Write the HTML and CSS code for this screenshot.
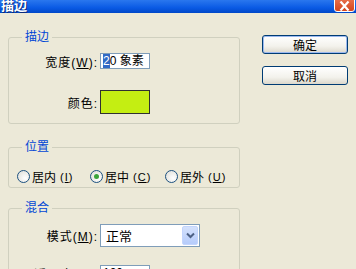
FILE: index.html
```html
<!DOCTYPE html>
<html lang="zh-CN">
<head>
  <meta charset="UTF-8" />
  <title>描边</title>
  <link rel="stylesheet" href="styles.css">
</head>
<body>

  <div class="titlebar">
    <span class="title">描边</span>
    <span class="close">
      <svg width="13" height="10" viewBox="0 0 13 10"><path d="M2.5 0.5 L10.5 9.5 M10.5 0.5 L2.5 9.5" stroke="#fff" stroke-width="2.2" fill="none"/></svg>
    </span>
  </div>

  <div class="dialog">
    <div class="main">

      <fieldset class="group stroke">
        <legend>描边</legend>
        <div class="form">
          <label>宽度(<u>W</u>):</label>
          <div class="textbox wide"><span class="sel">2</span>0 象素</div>
          <label class="tall">颜色:</label>
          <div class="swatch"></div>
        </div>
      </fieldset>

      <fieldset class="group position">
        <legend>位置</legend>
        <div class="radios">
          <div class="radio"><span class="dot"></span>居内<span class="key">(<u>I</u>)</span></div>
          <div class="radio"><span class="dot checked"></span>居中<span class="key">(<u>C</u>)</span></div>
          <div class="radio"><span class="dot"></span>居外<span class="key">(<u>U</u>)</span></div>
        </div>
      </fieldset>

      <fieldset class="group blend">
        <legend>混合</legend>
        <div class="form blend-form">
          <label>模式(<u class="mode">M</u>):</label>
          <div class="select">
            <span>正常</span>
            <span class="arrow">
              <svg width="9" height="7" viewBox="0 0 9 7"><path d="M1 1.5 L4.5 5 L8 1.5" stroke="#4d6185" stroke-width="2" fill="none"/></svg>
            </span>
          </div>
          <label>不透明度(<u>O</u>):</label>
          <div class="opacity"><div class="textbox">100</div><span class="pct">%</span></div>
        </div>
      </fieldset>

    </div>

    <div class="actions">
      <button class="btn default">确定</button>
      <button class="btn">取消</button>
    </div>
  </div>

</body>
</html>
```

FILE: styles.css
```css
* {
  box-sizing: border-box;
}

html, body {
  margin: 0;
  padding: 0;
}

body {
  width: 356px;
  height: 269px;
  overflow: hidden;
  background: #ece9d8;
  font-family: "Liberation Sans", "Noto Sans CJK SC", sans-serif;
  font-size: 12px;
  color: #000;
}

/* title bar, top is cut off */
.titlebar {
  height: 13px;
  background: linear-gradient(#2a77ee, #0a5ae4 60%, #0048c8);
  display: flex;
  justify-content: space-between;
  align-items: flex-end;
  overflow: hidden;
}

.title {
  color: #fff;
  font-weight: bold;
  font-size: 13px;
  line-height: 13px;
  margin-bottom: 1px;
  padding-left: 1px;
  text-shadow: 1px 1px 0 #0a2a7a;
}

.close {
  width: 21px;
  height: 14px;
  margin-right: 1px;
  align-self: flex-start;
  margin-top: -2px;
  background: linear-gradient(#e8704c, #d4461e);
  border: 1px solid #fff;
  border-radius: 0 0 3px 3px;
  display: flex;
  justify-content: center;
  align-items: center;
  padding-top: 2px;
}

.dialog {
  display: flex;
  padding-left: 8px;
}

.main {
  width: 232px;
  padding-top: 18px;
}

/* group boxes */
.group {
  margin: 0;
  padding: 0;
  min-width: 0;
  border: 1px solid #d0d0bf;
  border-radius: 3px;
}

.group legend {
  margin-left: 13px;
  padding: 0 3px;
  font-size: 12px;
  line-height: 12px;
  color: #0046d5;
}

.stroke {
  height: 93px;
}

.position {
  height: 47px;
  margin-top: 17px;
}

.blend {
  height: 80px;
  margin-top: 14px;
}

.form {
  display: grid;
  grid-template-columns: 88px auto;
  column-gap: 3px;
  align-items: center;
}

.form label {
  text-align: right;
  letter-spacing: 1px;
  margin-right: -1px;
}

.stroke .form {
  grid-template-rows: 16px 24px;
  row-gap: 21px;
  padding-top: 10px;
}

.textbox {
  height: 16px;
  width: 50px;
  border: 1px solid #7f9db9;
  background: #fff;
  padding-left: 2px;
  line-height: 14px;
  white-space: nowrap;
  overflow: hidden;
  font-size: 12px;
}

.sel {
  background: #316ac5;
  color: #fff;
}

.swatch {
  width: 50px;
  height: 24px;
  border: 1px solid #303030;
  background: #c4ee12;
}

/* radio row */
.position .radios {
  display: flex;
  padding: 17px 0 0 8px;
}

.radio {
  display: flex;
  align-items: center;
  height: 13px;
  white-space: nowrap;
}

.radio:nth-child(1) { width: 73px; }
.radio:nth-child(2) { width: 75px; }

.dot {
  width: 13px;
  height: 13px;
  border: 1px solid #1c5180;
  border-radius: 50%;
  background: radial-gradient(circle at 65% 65%, #fff, #dcdcd5);
  margin-right: 2px;
  display: flex;
  justify-content: center;
  align-items: center;
}

.dot.checked::after {
  content: "";
  width: 5px;
  height: 5px;
  border-radius: 50%;
  background: #3aa43a;
}

.key {
  font-size: 11px;
  margin-left: 4px;
  letter-spacing: 1px;
}

/* blend */
.blend-form {
  grid-template-rows: 23px 16px;
  row-gap: 18px;
  padding-top: 10px;
}

.select {
  width: 100px;
  height: 23px;
  border: 1px solid #7f9db9;
  background: #fff;
  display: flex;
  justify-content: space-between;
  align-items: center;
  padding: 1px 1px 1px 5px;
  font-size: 13px;
}

.arrow {
  width: 16px;
  height: 19px;
  background: linear-gradient(#d4e1fc, #b6ccfb);
  border: 1px solid #c3d5fd;
  border-radius: 2px;
  display: flex;
  justify-content: center;
  align-items: center;
}

.opacity {
  display: flex;
  align-items: center;
}

.pct {
  margin-left: 6px;
  font-size: 10px;
}

/* buttons */
.actions {
  display: flex;
  flex-direction: column;
  gap: 12px;
  margin-left: 22px;
  padding-top: 22px;
}

.btn {
  width: 86px;
  height: 19px;
  padding: 0;
  border: 1px solid #003c74;
  border-radius: 3px;
  background: linear-gradient(#ffffff, #f3f2ec 60%, #dcd8cc);
  font-family: "Noto Sans CJK SC", sans-serif;
  font-size: 12px;
  line-height: 16px;
  color: #000;
}

.btn.default {
  box-shadow: inset 0 0 0 1px #9cb9ef;
}
```
